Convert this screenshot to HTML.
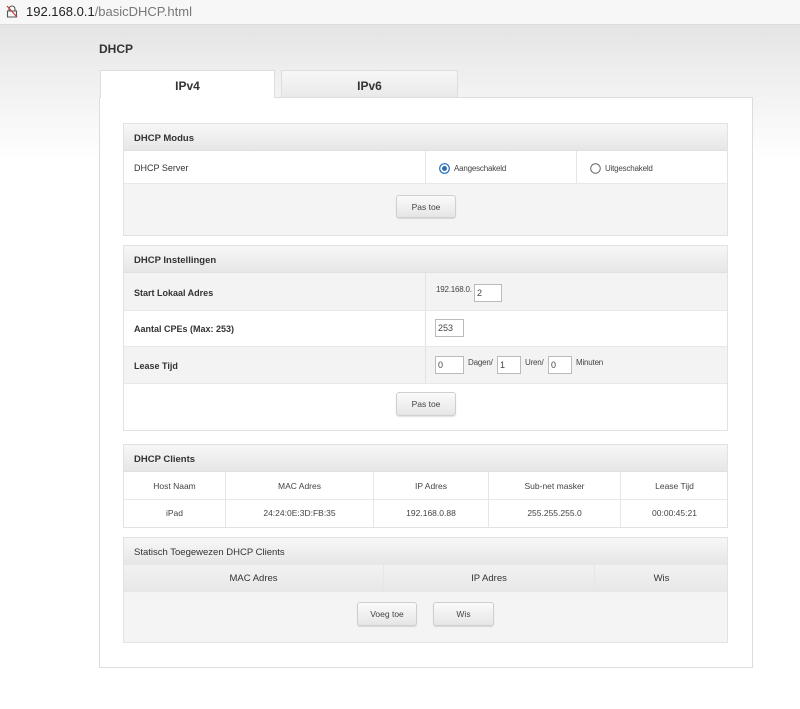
<!DOCTYPE html>
<html><head><style>
*{margin:0;padding:0;box-sizing:border-box}
body{width:800px;height:709px;position:relative;overflow:hidden;font-family:"Liberation Sans",Arial,sans-serif;background:linear-gradient(#e4e4e4 25px,#ececec 60px,#fff 160px);}
.a{position:absolute}
.bar{left:0;top:0;width:800px;height:25px;background:#f7f7f7;border-bottom:1px solid #dcdcdc;font-size:13px;color:#222;padding:4px 0 0 26px}
.bar span{color:#777}
.panel{left:99px;top:97px;width:654px;height:571px;background:#fff;border:1px solid #ddd}
.tab{height:28px;font-size:12px;font-weight:bold;color:#333;text-align:center;line-height:31px}
.sec{left:123px;width:605px;border:1px solid #e2e2e2;background:#fff}
.hd{height:27px;background:linear-gradient(#f7f7f7,#e6e6e6);font-size:9.5px;font-weight:bold;color:#333;padding:9px 0 0 10px;border-bottom:1px solid #e0e0e0}
.row{position:relative;font-size:9px;color:#333;border-bottom:1px solid #e8e8e8}
.sm{font-size:8px;letter-spacing:-0.2px;color:#444}
.btn{position:absolute;background:linear-gradient(#fafafa,#e6e6e6);border:1px solid #cfcfcf;border-radius:3px;font-size:8.5px;color:#444;text-align:center;line-height:22px;box-shadow:0 1px 1px rgba(0,0,0,.12)}
.inp{position:absolute;background:#fff;border:1px solid #bbb;height:18px;font-size:9px;color:#444;padding:3px 0 0 2px}
.cell{position:absolute;top:0;bottom:0;border-right:1px solid #e6e6e6;text-align:center;font-size:8.5px;color:#444}
</style></head><body>
<div class="a bar"><svg class="a" style="left:6px;top:5px" width="12" height="13" viewBox="0 0 12 13"><path d="M3 6V4a3 3 0 0 1 6 0v2M1.5 6h9v6h-9z" fill="none" stroke="#555" stroke-width="1.1"/><path d="M1 1l10 11" stroke="#c33" stroke-width="1.1"/></svg>192.168.0.1<span>/basicDHCP.html</span></div>
<div class="a" style="left:99px;top:42px;font-size:12px;font-weight:bold;color:#333">DHCP</div>
<div class="a panel"></div>
<div class="a tab" style="left:100px;top:70px;width:175px;background:#fff;border:1px solid #ddd;border-bottom:none">IPv4</div>
<div class="a tab" style="left:281px;top:70px;width:177px;background:linear-gradient(#f7f7f7,#e9e9e9);border:1px solid #ddd">IPv6</div>

<div class="a sec" style="top:123px;height:113px">
<div class="hd">DHCP Modus</div>
<div class="row" style="height:33px">
<div class="a" style="left:10px;top:12px">DHCP Server</div>
<div class="a" style="left:301px;top:0;height:32px;border-left:1px solid #e6e6e6"></div>
<div class="a" style="left:452px;top:0;height:32px;border-left:1px solid #e6e6e6"></div>
<svg class="a" style="left:315px;top:12px" width="11" height="11"><circle cx="5.5" cy="5.5" r="4.8" fill="#fff" stroke="#2a6fb8" stroke-width="1.2"/><circle cx="5.5" cy="5.5" r="2.5" fill="#2a6fb8"/></svg>
<div class="a sm" style="left:330px;top:13px">Aangeschakeld</div>
<svg class="a" style="left:466px;top:12px" width="11" height="11"><circle cx="5.5" cy="5.5" r="4.8" fill="#fff" stroke="#666" stroke-width="1"/></svg>
<div class="a sm" style="left:481px;top:13px">Uitgeschakeld</div>
</div>
<div style="height:51px;background:#f4f4f4;position:relative"><div class="btn" style="left:272px;top:11px;width:60px;height:23px">Pas toe</div></div>
</div>

<div class="a sec" style="top:245px;height:186px">
<div class="hd">DHCP Instellingen</div>
<div class="row" style="height:38px;background:#f3f3f3"><div class="a" style="left:10px;top:15px;font-weight:bold">Start Lokaal Adres</div><div class="a" style="left:301px;top:0;height:37px;border-left:1px solid #e2e2e2"></div><div class="a sm" style="left:312px;top:12px">192.168.0.</div><div class="inp" style="left:350px;top:11px;width:28px">2</div></div>
<div class="row" style="height:36px"><div class="a" style="left:10px;top:13px;font-weight:bold">Aantal CPEs (Max: 253)</div><div class="a" style="left:301px;top:0;height:35px;border-left:1px solid #e2e2e2"></div><div class="inp" style="left:311px;top:8px;width:29px">253</div></div>
<div class="row" style="height:37px;background:#f3f3f3"><div class="a" style="left:10px;top:14px;font-weight:bold">Lease Tijd</div><div class="a" style="left:301px;top:0;height:36px;border-left:1px solid #e2e2e2"></div><div class="inp" style="left:311px;top:9px;width:29px">0</div><div class="a sm" style="left:344px;top:11px">Dagen/</div><div class="inp" style="left:373px;top:9px;width:24px">1</div><div class="a sm" style="left:401px;top:11px">Uren/</div><div class="inp" style="left:424px;top:9px;width:24px">0</div><div class="a sm" style="left:452px;top:11px">Minuten</div></div>
<div style="position:relative;height:47px"><div class="btn" style="left:272px;top:8px;width:60px;height:24px">Pas toe</div></div>
</div>

<div class="a sec" style="top:444px;height:84px">
<div class="hd">DHCP Clients</div>
<div class="row" style="height:28px">
<div class="cell" style="left:0;width:102px;line-height:28px">Host Naam</div><div class="cell" style="left:102px;width:148px;line-height:28px">MAC Adres</div><div class="cell" style="left:250px;width:115px;line-height:28px">IP Adres</div><div class="cell" style="left:365px;width:132px;line-height:28px">Sub-net masker</div><div class="cell" style="left:497px;width:107px;line-height:28px;border:none">Lease Tijd</div></div>
<div class="row" style="height:27px;border:none">
<div class="cell" style="left:0;width:102px;line-height:27px">iPad</div><div class="cell" style="left:102px;width:148px;line-height:27px">24:24:0E:3D:FB:35</div><div class="cell" style="left:250px;width:115px;line-height:27px">192.168.0.88</div><div class="cell" style="left:365px;width:132px;line-height:27px">255.255.255.0</div><div class="cell" style="left:497px;width:107px;line-height:27px;border:none">00:00:45:21</div></div>
</div>

<div class="a sec" style="top:537px;height:106px;background:#f4f4f4">
<div class="hd" style="font-weight:normal;border:none">Statisch Toegewezen DHCP Clients</div>
<div class="row" style="height:27px;background:linear-gradient(#f2f2f2,#e7e7e7);border:none">
<div class="cell" style="left:0;width:260px;line-height:27px;font-size:9.5px;color:#333">MAC Adres</div><div class="cell" style="left:260px;width:211px;line-height:27px;font-size:9.5px;color:#333">IP Adres</div><div class="cell" style="left:471px;width:133px;line-height:27px;border:none;font-size:9.5px;color:#333">Wis</div></div>
<div style="position:relative;height:50px"><div class="btn" style="left:233px;top:10px;width:60px;height:24px">Voeg toe</div><div class="btn" style="left:309px;top:10px;width:61px;height:24px">Wis</div></div>
</div>
</body></html>
